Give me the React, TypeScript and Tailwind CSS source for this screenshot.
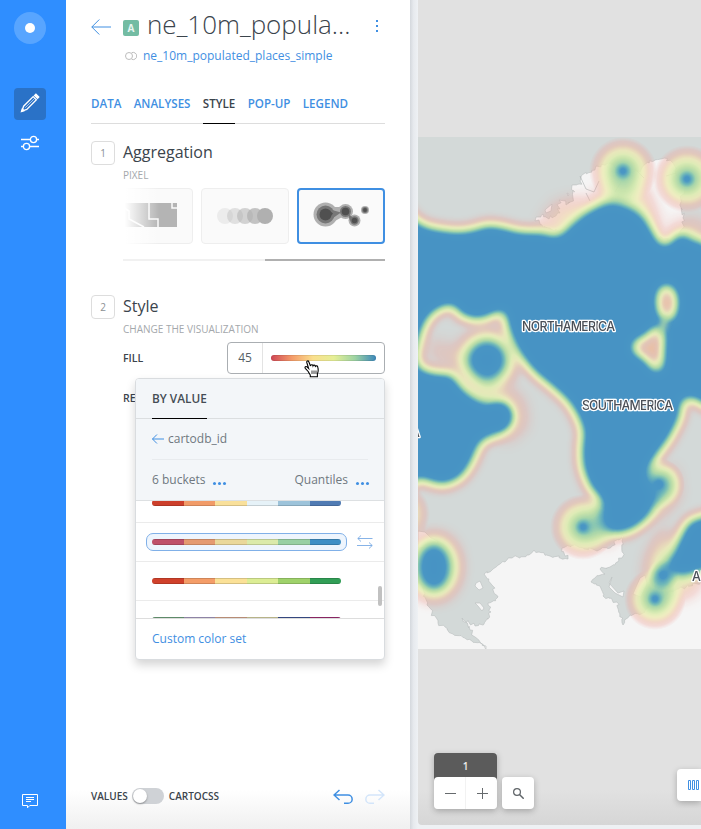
import React from "react";

type Pt = [number, number];

// Closed Catmull-Rom curve through the given points.
function smooth(pts: Pt[]): string {
  const n = pts.length;
  let d = `M${pts[0][0]} ${pts[0][1]}`;
  for (let i = 0; i < n; i++) {
    const p0 = pts[(i - 1 + n) % n];
    const p1 = pts[i];
    const p2 = pts[(i + 1) % n];
    const p3 = pts[(i + 2) % n];
    d += `C${p1[0] + (p2[0] - p0[0]) / 6} ${p1[1] + (p2[1] - p0[1]) / 6} ${p2[0] - (p3[0] - p1[0]) / 6} ${p2[1] - (p3[1] - p1[1]) / 6} ${p2[0]} ${p2[1]}`;
  }
  return d + "Z";
}

// Adds small inlets and headlands along a coastline.
function coast(pts: Pt[], amp: number): string {
  let seed = 11;
  const rnd = () => {
    seed = (seed * 16807) % 2147483647;
    return seed / 2147483647 - 0.5;
  };
  let d = "";
  pts.forEach((p, i) => {
    const q = pts[(i + 1) % pts.length];
    const len = Math.hypot(q[0] - p[0], q[1] - p[1]);
    const k = len > 120 ? 1 : Math.max(1, Math.round(len / 2.5));
    for (let j = 0; j < k; j++) {
      const t = j / k;
      const a = j === 0 ? 0 : amp;
      d += `${d ? "L" : "M"}${(p[0] + (q[0] - p[0]) * t + rnd() * a).toFixed(1)} ${(p[1] + (q[1] - p[1]) * t + rnd() * a).toFixed(1)}`;
    }
  });
  return d + "Z";
}

const MAIN: Pt[] = [
  [395, 203], [408, 210], [418, 219], [430, 225], [457, 229], [473, 227], [488, 223], [504, 225], [520, 229], [543, 230], [557, 233], [570, 222], [587, 209], [610, 200], [630, 205], [645, 215], [656, 232], [664, 243], [673, 236], [683, 232], [695, 238], [712, 247], [735, 300], [730, 400], [708, 409], [695, 402], [685, 402], [682, 418], [671, 440], [658, 458], [650, 476], [658, 496], [653, 514], [641, 527], [624, 535], [607, 533], [600, 519], [599, 502], [588, 488], [580, 467], [579, 446], [580, 430], [569, 407], [552, 390], [532, 373], [516, 352], [506, 330], [502, 314], [492, 318], [477, 322], [460, 317], [450, 308], [430, 320], [419, 352], [422, 366], [438, 371], [453, 373], [467, 389], [484, 400], [505, 402], [513, 417], [505, 433], [484, 443], [477, 456], [471, 468], [461, 480], [443, 487], [420, 481], [395, 472],
];
const HOLE_TOP: Pt[] = [[667, 287], [674, 297], [673, 312], [668, 319], [661, 312], [660, 295]];
const HOLE_LOW: Pt[] = [[634, 347], [648, 337], [660, 328], [661, 350], [658, 370], [648, 359]];
const AFRICA: Pt[] = [[730, 512], [701, 515], [687, 521], [677, 538], [670, 554], [664, 566], [672, 575], [685, 577], [701, 573], [730, 565]];

const ANTARCTICA: Pt[] = [
  [400, 655], [400, 583], [424, 585], [425, 597], [427, 605], [438, 623], [453, 634], [472, 641], [486, 646], [486, 650], [480, 642], [470, 630], [462, 618], [475, 626], [484, 624], [491, 612], [488, 603], [498, 597], [492, 585], [484, 574], [493, 569], [500, 564], [512, 558], [527, 555], [534, 550], [550, 556], [568, 559], [562, 548], [577, 546], [597, 551], [612, 546], [622, 535], [623, 553], [622, 558], [610, 567], [600, 569], [605, 574], [595, 578], [591, 582], [600, 586], [603, 596], [617, 602], [623, 625], [630, 615], [643, 613], [650, 603], [677, 589], [710, 580], [710, 655],
];
const ARCTIC: Pt[] = [
  [535, 221], [543, 214], [549, 219], [560, 213], [559, 200], [566, 205], [573, 198], [572, 185], [579, 184], [582, 175], [592, 172], [596, 166], [606, 164], [614, 165], [626, 170], [640, 172], [644, 165], [655, 160], [664, 158], [673, 163], [678, 176], [684, 187], [681, 202], [683, 218], [682, 229], [674, 240], [640, 236], [600, 232], [570, 232], [548, 228],
];

function HeatPoint({ x, y, r }: { x: number; y: number; r: number }) {
  return <circle cx={x} cy={y} r={r} fill="url(#pt)" />;
}

function MapLabel({ x, y, w, children }: { x: number; y: number; w?: number; children: string }) {
  return (
    <text
      x={x}
      y={y}
      textLength={w}
      fill="#4a4f57"
      stroke="#ffffff"
      strokeWidth="2.5"
      strokeLinejoin="round"
      paintOrder="stroke"
      className="font-['Inter',sans-serif] text-[12.5px] font-medium"
    >
      {children}
    </text>
  );
}

function WorldMap() {
  return (
    <svg className="block h-[512px] w-full" viewBox="418 137 283 512" preserveAspectRatio="xMinYMin slice">
      <defs>
        <filter id="blur" filterUnits="userSpaceOnUse" x="380" y="100" width="370" height="590">
          <feGaussianBlur stdDeviation="5.2" />
        </filter>
        <filter id="wide" filterUnits="userSpaceOnUse" x="380" y="100" width="370" height="590">
          <feGaussianBlur stdDeviation="8" />
        </filter>
        <filter id="soft" filterUnits="userSpaceOnUse" x="380" y="100" width="370" height="590">
          <feGaussianBlur stdDeviation="2.4" />
        </filter>
        <filter id="ramp" filterUnits="userSpaceOnUse" x="418" y="137" width="283" height="512" colorInterpolationFilters="sRGB">
          <feColorMatrix type="matrix" values="0 0 0 1 0  0 0 0 1 0  0 0 0 1 0  0 0 0 1 0" />
          <feComponentTransfer>
            <feFuncR type="table" tableValues="0.95 0.94 0.94 0.94 0.93 0.88 0.78 0.66 0.45 0.29 0.28" />
            <feFuncG type="table" tableValues="0.62 0.64 0.72 0.84 0.92 0.93 0.89 0.84 0.73 0.59 0.58" />
            <feFuncB type="table" tableValues="0.60 0.60 0.63 0.68 0.71 0.70 0.66 0.66 0.72 0.77 0.77" />
            <feFuncA type="table" tableValues="0 0.32 0.5 0.7 0.82 0.9 0.95 0.98 1 1 1" />
          </feComponentTransfer>
        </filter>
        <radialGradient id="pt">
          <stop offset="0" stopOpacity="0.95" />
          <stop offset="0.1" stopOpacity="0.87" />
          <stop offset="0.26" stopOpacity="0.7" />
          <stop offset="0.45" stopOpacity="0.54" />
          <stop offset="0.62" stopOpacity="0.38" />
          <stop offset="0.78" stopOpacity="0.19" />
          <stop offset="0.92" stopOpacity="0.06" />
          <stop offset="1" stopOpacity="0" />
        </radialGradient>
      </defs>
      <rect x="418" y="137" width="283" height="512" fill="#d3d9d8" />
      <g fill="#f5f5f5" stroke="#b9bebe" strokeWidth="0.6">
        <path d={coast(ANTARCTICA, 3.5)} />
        <path d={coast(ARCTIC, 5)} />
        <path d="M418 531L425 532L431 538L438 541L436 546L418 548Z" />
        <path d="M476 583L480 581L483 588L479 590L475 586ZM475 603L480 603L484 608L482 611L478 606Z" />
        <path d="M612 577L609 587L615 593L623 597L624 591L618 593L609 583Z" />
        <path d="M640 578L645 575L647 584L641 597L633 594Z" />
        <path d="M545 210L552 204L551 211L546 213ZM567 193L569 194L568 196Z" />
        <path d="M580 176L586 189L594 192L599 181M586 193L590 201M615 192L621 182M637 171L644 178M666 176L676 173" fill="none" stroke="#a9b0b0" />
      </g>
      <g filter="url(#ramp)">
        <g filter="url(#blur)">
          <path fillRule="evenodd" d={smooth(MAIN) + smooth(HOLE_TOP) + smooth(HOLE_LOW)} />
          <path d={smooth(AFRICA)} />
        </g>
        <g filter="url(#wide)">
          <circle cx="487" cy="360" r="25" />
          <ellipse cx="434" cy="567" rx="22" ry="29" />
          <path d="M592 205L608 185L640 185L652 212L660 235L640 215Z" opacity="0.42" />
          <path d="M540 228L556 205L580 200L595 205L560 232Z" opacity="0.3" />
          <path d="M592 500L612 510L612 540L592 540Z" opacity="0.5" />
          <path d="M655 475L672 470L676 495L660 512L645 515Z" opacity="0.5" />
          <path d="M658 560L700 560L695 590L665 600Z" opacity="0.4" />
          <path d="M650 560L665 530L672 545L662 590L648 590Z" opacity="0.5" />
          <path d="M672 225L700 222L710 245L672 245Z" opacity="0.3" />
          <path d="M424 340L438 360L462 368L460 350Z" opacity="0.2" />
          <path d="M468 388L498 385L520 400L524 425L505 440Z" opacity="0.35" />
        </g>
        <HeatPoint x={623} y={171} r={34} />
        <HeatPoint x={687} y={179} r={34} />
        <HeatPoint x={583} y={527} r={33} />
        <HeatPoint x={659} y={484} r={26} />
        <HeatPoint x={655} y={599} r={31} />
        <HeatPoint x={663} y={575} r={16} />
        <HeatPoint x={500} y={416} r={18} />
        <ellipse cx="408" cy="514" rx="22" ry="28" fill="url(#pt)" opacity="0.6" />
      </g>
      <path d="M666 317L661 333" stroke="#b2dba6" strokeWidth="6" opacity="0.8" filter="url(#link)" />
      <defs>
        <filter id="link" filterUnits="userSpaceOnUse" x="640" y="300" width="45" height="50">
          <feGaussianBlur stdDeviation="2.4" />
        </filter>
      </defs>
      <ellipse cx="667" cy="303" rx="3" ry="6" fill="#ebc3a6" filter="url(#soft)" />
      <path d="M643 348L656 339L656 358Z" fill="#e9bea4" filter="url(#soft)" />
      <MapLabel x={522} y={331} w={93}>NORTHAMERICA</MapLabel>
      <MapLabel x={582} y={409.5} w={91}>SOUTHAMERICA</MapLabel>
      <MapLabel x={692} y={581}>AFRICA</MapLabel>
      <MapLabel x={411} y={437}>A</MapLabel>
    </svg>
  );
}

function Sidebar() {
  return (
    <nav className="flex h-full w-[66px] shrink-0 flex-col items-center bg-[#2f8eff] pt-3 pr-[6px] pb-5">
      <div className="flex size-8 items-center justify-center rounded-full bg-[#58a5ff]">
        <div className="size-[10px] rounded-full bg-white" />
      </div>
      <button className="mt-11 flex size-8 items-center justify-center rounded bg-[#2a72c7]">
        <svg width="20" height="20" viewBox="0 0 20 20" fill="none" stroke="white" strokeWidth="1.3" className="-mt-[3px]">
          <path d="M2 18L3.6 13.2L13.2 3.6L16.4 6.8L6.8 16.4Z" />
          <path d="M5.3 14.7L14.6 5.4" strokeWidth="0.6" />
          <path d="M14.6 2.4L15.9 1.2L18.8 4.1L17.6 5.4Z" fill="white" />
          <path d="M1.5 18.5L2.3 16L4 17.7Z" fill="white" />
        </svg>
      </button>
      <svg width="18" height="16" viewBox="0 0 18 16" fill="none" stroke="white" strokeWidth="1.3" className="mt-[15px]">
        <path d="M0 4.5H9.3M15.7 4.5H18M0 11.5H2.3M8.7 11.5H18" />
        <circle cx="12.5" cy="4.5" r="3.1" />
        <circle cx="5.5" cy="11.5" r="3.1" />
      </svg>
      <svg width="16" height="15" viewBox="0 0 16 15" fill="none" stroke="white" className="mt-auto">
        <path d="M.5.5H15.5V11.5H7.8L5.5 13.8V11.5H.5ZM4 3.5H12M4 5.5H12M4 7.5H9" />
      </svg>
    </nav>
  );
}

function BackArrow({ className }: { className: string }) {
  return (
    <svg viewBox="0 0 20 16" fill="none" stroke="#3f8fe2" className={className}>
      <path d="M20 8H.8M8.3.5L.8 8L8.3 15.5" vectorEffect="non-scaling-stroke" />
    </svg>
  );
}

function StepTitle({ n, title, sub }: { n: string; title: string; sub: string }) {
  return (
    <div className="flex h-[42px]">
      <div className="flex size-6 shrink-0 items-center justify-center rounded border border-[#dddddd] text-[10px] text-[#8b8f94]">{n}</div>
      <div className="ml-2">
        <h2 className="h-6 text-[16px] leading-[22px] text-[#3b444c]">{title}</h2>
        <p className="text-[10px] leading-[20px] text-[#a4a8ac]">{sub}</p>
      </div>
    </div>
  );
}

const RAMPS = {
  redBlue: ["#cc3f2b", "#f19b68", "#f9e09b", "#e6f2f8", "#9dc3da", "#507bb3"],
  spectral: ["#bf5069", "#e59a70", "#ead89a", "#dbeaaa", "#98d0a3", "#3f8fc5"],
  redGreen: ["#d0412b", "#f49d68", "#fbe197", "#dced94", "#9fd26b", "#319e56"],
  bold: ["#6fa37c", "#a79ac2", "#d7a58a", "#d8d3a0", "#3f5496", "#a02c74"],
};

function Ramp({ colors }: { colors: string[] }) {
  return (
    <div className="flex h-[6px] w-[189px] overflow-hidden rounded-[3px]">
      {colors.map((c) => (
        <span key={c} className="h-full flex-1 border-y border-black/15" style={{ backgroundColor: c }} />
      ))}
    </div>
  );
}

function Dots() {
  return (
    <span className="flex gap-[2px] pt-[6px]">
      <i className="size-[3px] rounded-full bg-[#3f8fe2]" />
      <i className="size-[3px] rounded-full bg-[#3f8fe2]" />
      <i className="size-[3px] rounded-full bg-[#3f8fe2]" />
    </span>
  );
}

function ColorPopup() {
  return (
    <div className="absolute top-[378px] left-[69px] z-10 flex h-[282px] w-[250px] flex-col overflow-hidden rounded-[4px] border border-[#d9dcdf] bg-white shadow-[0_5px_10px_rgba(0,0,0,0.17)]">
      <div className="h-[122px] shrink-0 border-b border-[#dde0e2] bg-[#f3f6f9] text-[12px] text-[#6f7880]">
        <div className="h-10 border-b border-[#dbdee0] px-4">
          <span className="inline-block h-10 border-b border-black text-[11.8px] leading-[39px] font-semibold text-[#444c54]">BY VALUE</span>
        </div>
        <div className="mx-4 flex h-[41px] items-center border-b border-[#e8ebee]">
          <BackArrow className="h-[10px] w-3" />
          <span className="ml-1">cartodb_id</span>
        </div>
        <div className="flex h-[40px] items-center pr-[15px] pl-4">
          <span className="mr-2">6 buckets</span>
          <Dots />
          <span className="mr-2 ml-auto">Quantiles</span>
          <Dots />
        </div>
      </div>
      <div className="relative h-[117px] shrink-0 overflow-hidden">
        <div className="-mt-[17px] flex h-[39px] items-center border-b border-[#ebebeb] px-4"><Ramp colors={RAMPS.redBlue} /></div>
        <div className="flex h-[39px] items-center border-b border-[#ebebeb] px-[10px]">
          <div className="flex h-[18px] w-[201px] items-center justify-center rounded-[7px] border border-[#80b0e8] bg-[#eef5fd]">
            <Ramp colors={RAMPS.spectral} />
          </div>
          <svg width="16" height="14" viewBox="0 0 16 14" fill="none" stroke="#79aae4" className="ml-[10px]">
            <path d="M15.5 3.5H.8M4 .5L.8 3.5L4 6.5M0 10.5H15.2M12 7.5L15.2 10.5L12 13.5" strokeWidth=".9" />
          </svg>
        </div>
        <div className="flex h-[39px] items-center border-b border-[#ebebeb] px-4"><Ramp colors={RAMPS.redGreen} /></div>
        <div className="flex h-[39px] items-center px-4 pb-[1px]"><Ramp colors={RAMPS.bold} /></div>
        <div className="absolute top-[85px] right-[2px] h-5 w-1 rounded-full bg-[#c1c1c1]" />
      </div>
      <div className="flex-1 border-t border-[#dddddd] px-4 text-[12px] leading-[39px] text-[#3f8fe2]">Custom color set</div>
    </div>
  );
}

function Cursor() {
  return (
    <svg width="16" height="18" viewBox="0 0 16 18" className="absolute top-[360px] left-[238px] z-20">
      <path d="M4.2 11.5L1.3 8.3C.3 7 2 6 3 6.9L4.6 8.4L2.8 2.5C2.4.8 4.2.2 4.8 1.7L6.5 6C6.5 4.5 8.7 4.3 9 5.8C9.4 4.8 11.2 4.9 11.4 6.3C12.2 5.4 13.5 5.8 13.8 7.2C14.4 9.7 14.7 11.2 13.4 13.6V16.8H6.3V15.2C6 14 5 13.4 4.2 11.5Z" fill="white" stroke="black" strokeWidth="1.1" />
      <path d="M8 10.5V14M10 10.5V14M12 10.5V14" stroke="black" strokeWidth=".8" />
    </svg>
  );
}

function EditorPanel() {
  return (
    <main className="relative flex h-full w-[344px] shrink-0 flex-col bg-[linear-gradient(to_bottom,#ffffff_790px,#f0f0f0_829px)] px-[25px]">
      <header className="flex h-[89px] shrink-0">
        <BackArrow className="mt-[19px] h-4 w-5 shrink-0" />
        <div className="ml-3 w-[236px]">
          <div className="flex h-[46px] items-center">
            <span className="mt-[10px] mr-2 flex size-4 items-center justify-center rounded-[2px] bg-[#73bca3] text-[10px] font-bold text-[#e8f5f0]">A</span>
            <h1 className="mt-[2px] text-[26px] leading-[44px] font-light whitespace-nowrap text-[#3b444c]">ne_10m_popula...</h1>
          </div>
          <div className="flex h-5 items-center">
            <svg width="12" height="10" viewBox="0 0 12 10" fill="none" stroke="#bdbdbd" className="mr-[6px] ml-[2px]">
              <circle cx="4" cy="5" r="3.5" />
              <path d="M6.7 1.7A3.6 3.6 0 1 1 6.7 8.3" />
            </svg>
            <span className="text-[12px] whitespace-nowrap text-[#3f8fe2]">ne_10m_populated_places_simple</span>
          </div>
        </div>
        <div className="mt-5 ml-[17px] flex flex-col gap-[3px]">
          <i className="size-[2px] bg-[#3f8fe2]" />
          <i className="size-[2px] bg-[#3f8fe2]" />
          <i className="size-[2px] bg-[#3f8fe2]" />
        </div>
      </header>
      <div className="flex h-[35px] shrink-0 gap-[12.3px] border-b border-[#dddddd] text-[11.6px] leading-[29px] font-semibold text-[#3f8fe2]">
        <span>DATA</span>
        <span>ANALYSES</span>
        <span className="h-[35px] border-b border-black text-[#3b444c]">STYLE</span>
        <span>POP-UP</span>
        <span>LEGEND</span>
      </div>
      <section className="mt-[17px] shrink-0">
        <StepTitle n="1" title="Aggregation" sub="PIXEL" />
        <div className="relative mt-[5px] ml-8 flex gap-2 overflow-hidden">
          <div className="-ml-[18px] h-14 w-[88px] shrink-0 rounded border border-[#eeeeee] bg-[#fafafa]">
            <svg width="86" height="54" viewBox="106 189 86 54">
              <path d="M106 203H177V227H106Z" fill="#b4b4b4" />
              <path d="M149 202V219H158V228M172 202V208H178M124 208L129 211V219L144 227" fill="none" stroke="#fafafa" strokeWidth="1.5" />
            </svg>
          </div>
          <div className="flex h-14 w-[88px] shrink-0 items-center justify-center rounded border border-[#eeeeee] bg-[#fafafa]">
            <svg width="56" height="16" viewBox="0 0 56 16">
              <circle cx="8" cy="8" r="8" fill="#ececec" />
              <circle cx="18" cy="8" r="8" fill="#b0b0b0" opacity=".35" />
              <circle cx="28" cy="8" r="8" fill="#b0b0b0" opacity=".55" />
              <circle cx="38" cy="8" r="8" fill="#b0b0b0" opacity=".75" />
              <circle cx="48" cy="8" r="8" fill="#b0b0b0" />
            </svg>
          </div>
          <div className="h-14 w-[88px] shrink-0 rounded border-2 border-[#3f8fe2] bg-[#fafafa]">
            <svg width="84" height="52" viewBox="299 190 84 52">
              <g fill="#b0b0b0"><circle cx="325.5" cy="214.5" r="12" /><circle cx="345.5" cy="211.5" r="7.5" /><circle cx="354.5" cy="220.5" r="6" /><circle cx="365" cy="210" r="4" /><path d="M334 207L344 207V216L335 221Z" /></g>
              <g fill="#777777"><circle cx="325.5" cy="214.5" r="9" /><circle cx="345.5" cy="211.5" r="5.5" /><circle cx="354.5" cy="220.5" r="4.2" /><circle cx="365" cy="210" r="2.9" /><path d="M332 210L341 212.5L333 218ZM348 214L354 218L350 221Z" /></g>
              <g fill="#505050"><circle cx="325.5" cy="214.5" r="6" /><circle cx="345.5" cy="211.5" r="3.8" /><circle cx="354.5" cy="220.5" r="2.8" /><circle cx="365" cy="210" r="1.9" /><path d="M330 211L333 213.5L330 217Z" /></g>
            </svg>
          </div>
          <div className="absolute inset-y-0 left-0 w-9 bg-[linear-gradient(to_right,#ffffff_5%,#ffffff00)]" />
        </div>
        <div className="mt-[15px] ml-8 h-[2px] bg-[#f1f1f1]"><div className="ml-auto h-full w-[120px] bg-[#b0b0b0]" /></div>
      </section>
      <section className="mt-[34px] shrink-0">
        <StepTitle n="2" title="Style" sub="CHANGE THE VISUALIZATION" />
        <div className="mt-[5px] ml-8 flex h-8 items-center justify-between text-[10.5px] font-semibold text-[#3b444c]">
          <span className="pt-[2px]">FILL</span>
          <div className="flex h-8 w-[158px] items-center rounded border border-[#aaaeb2]">
            <span className="flex h-full w-[35px] items-center justify-center border-r border-[#e3e3e3] text-[12px] font-normal text-[#565f66]">45</span>
            <div className="mx-auto h-[6px] w-[105px] rounded-full bg-[linear-gradient(to_right,#cf4655,#f49b69,#fadf8d,#e5ef96,#9dd3a3,#3c88bb)] shadow-[inset_0_0_0_1px_rgba(0,0,0,0.08)]" />
          </div>
        </div>
        <div className="mt-[17px] ml-8 text-[10.5px] leading-[14px] font-semibold text-[#3b444c]">RESOLUTION</div>
      </section>
      <footer className="mt-auto mb-[20px] flex h-[26px] shrink-0 items-center text-[10px] font-semibold text-[#3b444c]">
        <span>VALUES</span>
        <span className="mx-[4.5px] flex h-4 w-8 items-center rounded-full bg-[#cfd2d6] p-[1px]">
          <i className="size-[14px] rounded-full bg-white shadow-[0_1px_2px_rgba(0,0,0,0.35)]" />
        </span>
        <span>CARTOCSS</span>
        <svg width="20" height="16" viewBox="0 0 20 16" fill="none" stroke="#3f8fe2" strokeWidth="1.5" className="mt-[2px] ml-auto">
          <path d="M6.5 1L1 6L6.5 11M1 6H15A4.1 4.1 0 0 1 15 14.3H11" />
        </svg>
        <svg width="20" height="16" viewBox="0 0 20 16" fill="none" stroke="#d3e5fa" strokeWidth="1.5" className="mt-[2px] ml-3">
          <path d="M13.5 1L19 6L13.5 11M19 6H5A4.1 4.1 0 0 0 5 14.3H9" />
        </svg>
      </footer>
      <ColorPopup />
      <Cursor />
    </main>
  );
}

function MapControls() {
  return (
    <div className="mt-auto mb-4 flex items-end pl-4">
      <div className="w-[63px] rounded-b shadow-[0_2px_6px_rgba(0,0,0,0.25)]">
        <div className="flex h-7 items-center justify-center rounded-t bg-[#5b5b5b] pb-[1px] text-[10px] font-semibold text-[#eeeeee]">1</div>
        <div className="-mt-1 flex h-8 rounded bg-white">
          <button className="flex w-8 items-center justify-center border-r border-[#f2f2f2] pl-[2px]">
            <svg width="11" height="11" viewBox="0 0 11 11" stroke="#666a6d" fill="none"><path d="M0 5.5H11" /></svg>
          </button>
          <button className="flex flex-1 items-center justify-center pl-[2px]">
            <svg width="11" height="11" viewBox="0 0 11 11" stroke="#666a6d" fill="none"><path d="M0 5.5H11M5.5 0V11" /></svg>
          </button>
        </div>
      </div>
      <button className="ml-[5px] flex size-8 items-center justify-center rounded bg-white shadow-[0_2px_6px_rgba(0,0,0,0.25)]">
        <svg width="11" height="11" viewBox="0 0 11 11" fill="none" stroke="#5f6468"><circle cx="4" cy="4" r="3.4" strokeWidth="1.2" /><path d="M6.5 6.5L10.7 10.7" strokeWidth="1.5" /></svg>
      </button>
      <button className="mb-2 ml-auto flex h-8 w-6 items-center rounded-l bg-white pl-[11px] shadow-[0_2px_6px_rgba(0,0,0,0.25)]">
        <svg width="11" height="10" viewBox="0 0 11 10" fill="none" stroke="#3f8fe2"><path d="M.5.5H2.5V9.5H.5ZM4.5.5H6.5V9.5H4.5ZM8.5.5H10.5V9.5H8.5Z" /></svg>
      </button>
    </div>
  );
}

export default function App() {
  return (
    <div className="flex h-[829px] w-[701px] overflow-hidden bg-[#eef1f4] font-['Open_Sans',sans-serif]">
      <Sidebar />
      <EditorPanel />
      <div className="h-full w-2 shrink-0 bg-[linear-gradient(to_right,#d4d8dd,#e7eaee_45%,#eef1f4)]" />
      <div className="flex h-[825px] min-w-0 flex-1 flex-col rounded-bl bg-[linear-gradient(to_bottom,#e1e1e1_790px,#d6d6d6_825px)] pt-[137px]">
        <WorldMap />
        <MapControls />
      </div>
    </div>
  );
}
